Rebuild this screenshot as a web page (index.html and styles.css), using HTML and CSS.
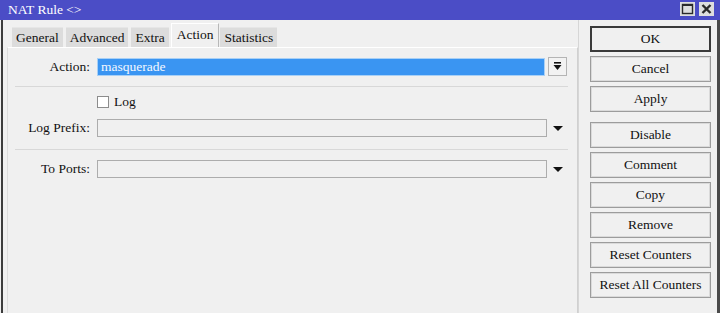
FILE: index.html
```html
<!DOCTYPE html>
<html>
<head>
<meta charset="utf-8">
<link rel="stylesheet" href="styles.css">
</head>
<body>
<div class="window">
  <div class="titlebar">
    <span class="title">NAT Rule &lt;&gt;</span>
    <div class="controls">
      <span class="ctl"><svg width="15" height="14" viewBox="0 0 15 14"><rect x="2.5" y="2.5" width="10" height="9" fill="none" stroke="#2a2a2a" stroke-width="1.4"/><rect x="2" y="2" width="11" height="2" fill="#2a2a2a"/></svg></span>
      <span class="ctl"><svg width="15" height="14" viewBox="0 0 15 14"><path d="M3.5 3 L11.5 11 M11.5 3 L3.5 11" stroke="#2a2a2a" stroke-width="2.4"/></svg></span>
    </div>
  </div>
  <div class="main">
    <div class="left">
      <div class="tabs">
        <div class="tab">General</div>
        <div class="tab">Advanced</div>
        <div class="tab">Extra</div>
        <div class="tab active">Action</div>
        <div class="tab">Statistics</div>
      </div>
      <div class="panel">
        <div class="row first">
          <label class="lbl">Action:</label>
          <div class="field selected">masquerade</div>
          <div class="dropbtn"><svg width="9" height="9" viewBox="0 0 9 9"><rect x="1" y="0" width="7" height="1.6" fill="#111"/><path d="M0.5 3 H8.5 L4.5 8 Z" fill="#111"/></svg></div>
        </div>
        <div class="sep s1"></div>
        <div class="row check">
          <span class="box"></span><span class="cbtext">Log</span>
        </div>
        <div class="row prefix">
          <label class="lbl">Log Prefix:</label>
          <div class="field wide"></div>
          <span class="tri"></span>
        </div>
        <div class="sep s2"></div>
        <div class="row ports">
          <label class="lbl">To Ports:</label>
          <div class="field wide"></div>
          <span class="tri"></span>
        </div>
      </div>
    </div>
    <div class="right">
      <div class="btn default">OK</div>
      <div class="btn">Cancel</div>
      <div class="btn">Apply</div>
      <div class="btn gap">Disable</div>
      <div class="btn">Comment</div>
      <div class="btn">Copy</div>
      <div class="btn">Remove</div>
      <div class="btn">Reset Counters</div>
      <div class="btn">Reset All Counters</div>
    </div>
  </div>
</div>
</body>
</html>
```

FILE: styles.css
```css
html, body {
  margin: 0;
  padding: 0;
  background: #f0f0f0;
}
body {
  font-family: "Liberation Serif", "Times New Roman", Tinos, serif;
  font-size: 13.5px;
  color: #111;
}
.window {
  width: 720px;
  height: 313px;
  overflow: hidden;
}
.titlebar {
  height: 20px;
  background: #4b4dc6;
  display: flex;
  align-items: center;
  justify-content: space-between;
  padding-left: 8px;
  box-sizing: border-box;
}
.title {
  color: #fff;
  font-size: 13.5px;
  line-height: 20px;
}
.controls {
  display: flex;
  gap: 4px;
  padding-right: 6px;
  align-self: flex-start;
  padding-top: 2px;
}
.ctl {
  width: 15px;
  height: 14px;
  background: #dedede;
  display: block;
}
.ctl svg { display: block; }
.main {
  display: flex;
  height: 293px;
  margin-left: 1px;
  border-left: 2px solid #3c3c3c;
  border-right: 3px solid #4a4a4a;
}
.left {
  width: 575px;
  padding-top: 3px;
  padding-left: 4px;
  box-sizing: border-box;
  display: flex;
  flex-direction: column;
}
.tabs {
  height: 24px;
  display: flex;
  align-items: flex-end;
  padding-left: 5px;
}
.tab {
  height: 20px;
  line-height: 19px;
  background: #dcdcdc;
  padding: 0 4px;
  margin-right: 3px;
  box-sizing: border-box;
  border-top: 1px solid #e6e6e6;
}
.tab.active {
  height: 24px;
  line-height: 22px;
  background: #f0f0f0;
  border-top: 1px solid #fff;
  border-left: 1px solid #fff;
  border-right: 1px solid #b8b8b8;
  margin-left: -1px;
  margin-right: 1px;
  padding: 0 5px;
}
.panel {
  flex: 1;
  border-top: 1px solid #fff;
  border-left: 1px solid #dcdcdc;
  border-right: 1px solid #d0d0d0;
  padding-top: 9px;
}
.row {
  display: flex;
  align-items: center;
}
.lbl {
  width: 82px;
  text-align: right;
  margin-right: 7px;
  white-space: nowrap;
}
.row.first { height: 19px; }
.field {
  height: 18px;
  box-sizing: border-box;
  border: 1px solid #acacac;
  background: #f0f0f0;
  width: 448px;
}
.field.wide { width: 450px; }
.field.selected {
  background: #3a95f2;
  border: 1px solid #a8d0f6;
  color: #f4f8ff;
  padding-left: 3px;
  line-height: 16px;
}
.dropbtn {
  width: 19px;
  height: 19px;
  box-sizing: border-box;
  margin-left: 3px;
  border: 1px solid #b4b4b4;
  background: #f2f2f2;
  display: flex;
  align-items: center;
  justify-content: center;
}
.dropbtn svg { display: block; }
.sep {
  height: 1px;
  background: #d8d8d8;
  margin-left: 7px;
  margin-right: 9px;
}
.s1 { margin-top: 10px; }
.row.check {
  margin-top: 8px;
  height: 13px;
  padding-left: 89px;
}
.box {
  width: 12px;
  height: 12px;
  box-sizing: border-box;
  border: 1px solid #8c8c8c;
  background: #fff;
  display: block;
}
.cbtext { margin-left: 5px; }
.row.prefix { margin-top: 11px; height: 18px; }
.s2 { margin-top: 12px; }
.row.ports { margin-top: 10px; height: 18px; }
.tri {
  width: 0;
  height: 0;
  border-left: 5px solid transparent;
  border-right: 5px solid transparent;
  border-top: 5px solid #111;
  margin-left: 6px;
}
.right {
  flex: 1;
  padding-left: 11px;
  padding-top: 6px;
  border-left: 1px solid #d6d6d6;
  box-sizing: border-box;
  display: flex;
  flex-direction: column;
  gap: 4px;
}
.btn {
  width: 121px;
  height: 26px;
  box-sizing: border-box;
  border: 1px solid #9c9c9c;
  box-shadow: inset 0 0 0 1px #dadada;
  background: #f0f0f0;
  text-align: center;
  line-height: 24px;
  white-space: nowrap;
}
.btn.default {
  border: 2px solid #3a3a3a;
  box-shadow: none;
  line-height: 22px;
}
.btn.gap { margin-top: 6px; }
```
